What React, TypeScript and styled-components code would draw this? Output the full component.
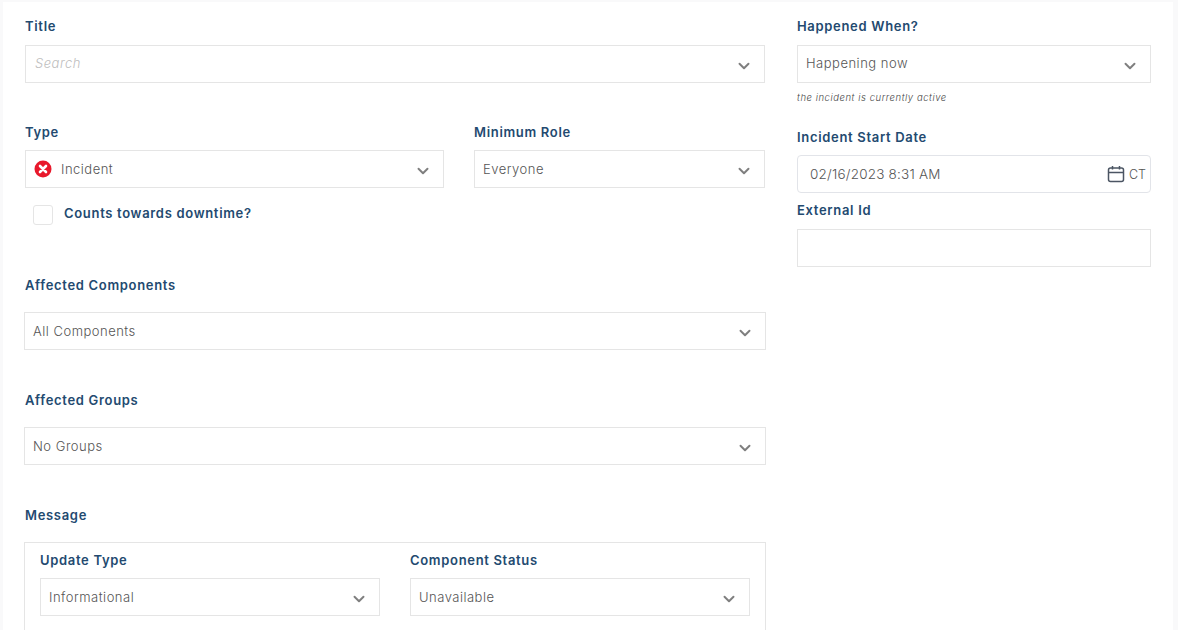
import React from "react";
import styled, { createGlobalStyle } from "styled-components";
import { ChevronDown } from "lucide-react";

const GlobalStyle = createGlobalStyle`
    html, body {
        margin: 0;
        height: 630px;
        overflow: hidden;
        background-color: #f9f9fa;
        font-family: "Inter", "Liberation Sans", sans-serif;
    }
`;

const Panel = styled.div`
    height: 628px;
    width: 1170px;
    margin: 2px 0 0 3px;
    background-color: #ffffff;
    overflow: hidden;
    display: flex;
`;

const LeftColumn = styled.div`
    width: 742px;
    margin-left: 21px;
    padding-top: 14px;
    display: flex;
    flex-direction: column;
`;

const RightColumn = styled.div`
    width: 354px;
    margin-left: 31px;
    padding-top: 14px;
    display: flex;
    flex-direction: column;
`;

const Row = styled.div<{ $gap: number }>`
    display: flex;
    gap: ${(p) => p.$gap}px;
`;

const Field = styled.div<{ $width?: number; $top?: number; $left?: number }>`
    width: ${(p) => (p.$width ? `${p.$width}px` : "auto")};
    margin-top: ${(p) => p.$top ?? 0}px;
    margin-left: ${(p) => p.$left ?? 0}px;
    flex-shrink: 0;
`;

const Label = styled.div<{ $below?: number; $indent?: number }>`
    height: 20px;
    line-height: 20px;
    margin-bottom: ${(p) => p.$below ?? 9}px;
    margin-left: ${(p) => p.$indent ?? 0}px;
    font-size: 13px;
    font-weight: 600;
    letter-spacing: 0.68px;
    color: #234a70;
    white-space: nowrap;
`;

const Select = styled.div<{ $pad?: number }>`
    box-sizing: border-box;
    height: 38px;
    border: 1px solid #e5e5e5;
    padding: 0 11px 0 ${(p) => p.$pad ?? 8}px;
    display: flex;
    align-items: center;
    font-size: 13px;
    font-weight: 300;
    letter-spacing: 0.5px;
    color: #555555;
    background-color: #ffffff;
`;

const Value = styled.span<{ $raised?: boolean }>`
    flex: 1;
    margin-top: ${(p) => (p.$raised ? "-2px" : "0")};
`;

const Placeholder = styled(Value)`
    font-style: italic;
    color: #bdbdbd;
`;

const Chevron = styled(ChevronDown)`
    width: 18px;
    height: 18px;
    color: #7f7f7f;
    stroke-width: 2.6;
    position: relative;
    top: 2px;
`;

const TypeIcon = styled.svg`
    width: 18px;
    height: 18px;
    margin-right: 9px;
`;

const CheckRow = styled.div`
    display: flex;
    margin: 17px 0 0 8px;
`;

const CheckBox = styled.div`
    box-sizing: border-box;
    width: 20px;
    height: 20px;
    border: 1px solid #e5e5e5;
    border-radius: 3px;
    margin-right: 11px;
`;

const CheckLabel = styled(Label)`
    margin-top: -2px;
    margin-bottom: 0;
`;

const MessageBox = styled.div`
    box-sizing: border-box;
    height: 120px;
    border: 1px solid #e5e5e5;
    padding: 7px 15px 0;
`;

const Hint = styled.div`
    height: 14px;
    line-height: 14px;
    margin-top: 8px;
    font-size: 9.5px;
    font-style: italic;
    font-weight: 300;
    letter-spacing: 0.55px;
    color: #444444;
`;

const DateBox = styled(Select)`
    border: 1px solid #e2e4e9;
    border-radius: 4px;
    padding: 0 4px 0 12px;
    font-size: 13.5px;
    letter-spacing: 0.2px;
`;

const Zone = styled.span`
    margin-left: 4px;
    font-size: 12.5px;
    letter-spacing: 0;
`;

const CalendarIcon = styled.svg`
    width: 18px;
    height: 18px;
`;

const IdInput = styled.div`
    box-sizing: border-box;
    height: 38px;
    border: 1px solid #e5e5e5;
`;

function DropDown({ value, pad, placeholder, raised }: { value: string; pad?: number; placeholder?: boolean; raised?: boolean }) {
    return <Select $pad={pad}>
        {placeholder ? <Placeholder $raised={raised}>{value}</Placeholder> : <Value $raised={raised}>{value}</Value>}
        <Chevron />
    </Select>;
}

function App() {
    return <>
        <GlobalStyle />
        <Panel>
            <LeftColumn>
                <Field $width={740} $left={1}>
                    <Label>Title</Label>
                    <DropDown value="Search" pad={9} placeholder raised />
                </Field>

                <Field $top={39} $left={1}>
                    <Row $gap={30}>
                        <Field $width={419}>
                            <Label $below={8}>Type</Label>
                            <Select>
                                <TypeIcon viewBox="0 0 18 18">
                                    <circle cx="9" cy="9" r="8.5" fill="#e8192c" />
                                    <path d="M6 6l6 6M12 6l-6 6" stroke="#fff" strokeWidth="2.6" strokeLinecap="round" />
                                </TypeIcon>
                                <Value>Incident</Value>
                                <Chevron />
                            </Select>
                        </Field>
                        <Field $width={291}>
                            <Label $below={8}>Minimum Role</Label>
                            <DropDown value="Everyone" />
                        </Field>
                    </Row>
                    <CheckRow>
                        <CheckBox />
                        <CheckLabel>Counts towards downtime?</CheckLabel>
                    </CheckRow>
                </Field>

                <Field $top={50}>
                    <Label $below={17} $indent={1}>Affected Components</Label>
                    <DropDown value="All Components" />
                </Field>

                <Field $top={40}>
                    <Label $below={17} $indent={1}>Affected Groups</Label>
                    <DropDown value="No Groups" />
                </Field>

                <Field $top={40}>
                    <Label $below={17} $indent={1}>Message</Label>
                    <MessageBox>
                        <Row $gap={30}>
                            <Field $width={340}>
                                <Label $below={8}>Update Type</Label>
                                <DropDown value="Informational" />
                            </Field>
                            <Field $width={340}>
                                <Label $below={8}>Component Status</Label>
                                <DropDown value="Unavailable" />
                            </Field>
                        </Row>
                    </MessageBox>
                </Field>
            </LeftColumn>

            <RightColumn>
                <Field>
                    <Label>Happened When?</Label>
                    <DropDown value="Happening now" raised />
                    <Hint>the incident is currently active</Hint>
                </Field>
                <Field $top={22}>
                    <Label $below={8}>Incident Start Date</Label>
                    <DateBox>
                        <Value>02/16/2023 8:31 AM</Value>
                        <CalendarIcon viewBox="0 0 18 18" fill="none" stroke="#4b5563" strokeWidth="1.5">
                            <rect x="1.5" y="3" width="15" height="13.5" rx="2" />
                            <path d="M1.5 7.5h15M5.5 1v3.5M12.5 1v3.5" />
                        </CalendarIcon>
                        <Zone>CT</Zone>
                    </DateBox>
                </Field>
                <Field $top={7}>
                    <Label>External Id</Label>
                    <IdInput />
                </Field>
            </RightColumn>
        </Panel>
    </>;
}

export default App;
